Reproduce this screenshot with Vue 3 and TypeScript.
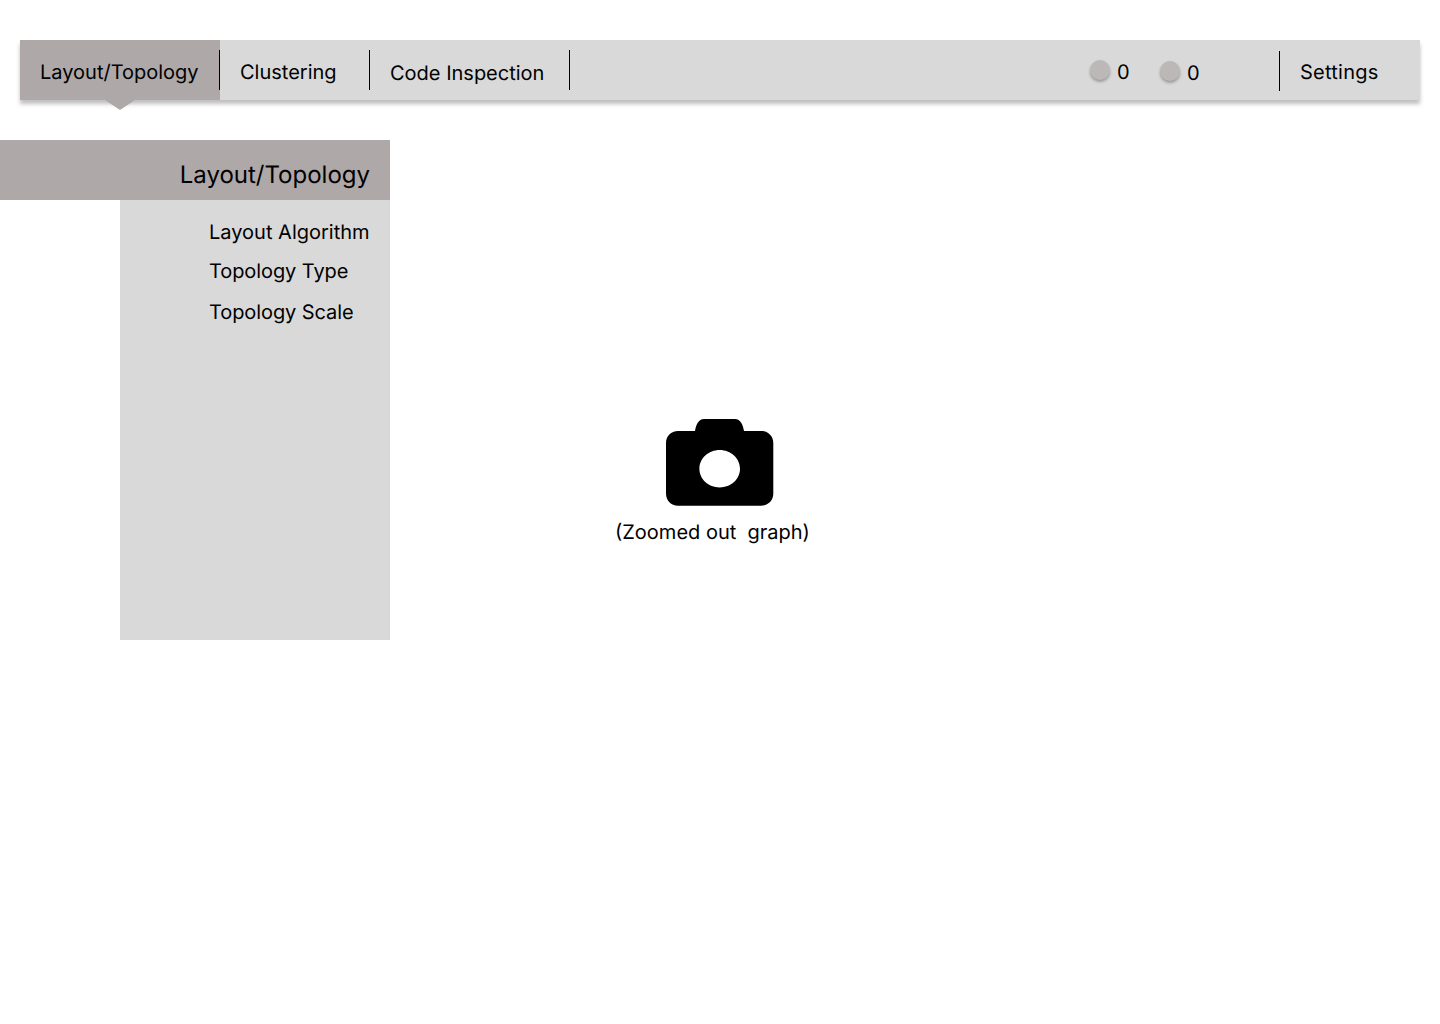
<script setup lang="ts">
const items: { label: string; cls: string }[] = [
  { label: 'Layout Algorithm', cls: 'i1' },
  { label: 'Topology Type', cls: 'i2' },
  { label: 'Topology Scale', cls: 'i3' },
]
</script>

<template>
  <div class="page">
    <header class="bar">
      <div class="tab active">
        <span>Layout/Topology</span>
        <i class="caret"></i>
      </div>
      <div class="tab clustering"><span>Clustering</span></div>
      <div class="tab code"><span>Code Inspection</span></div>
      <div class="status">
        <div class="stat first"><i class="dot"></i><span class="count">0</span></div>
        <div class="stat second"><i class="dot"></i><span class="count">0</span></div>
      </div>
      <div class="settings"><span>Settings</span></div>
    </header>

    <div class="content">
      <aside class="side">
        <div class="side-title">Layout/Topology</div>
        <ul class="side-body">
          <li v-for="item in items" :key="item.label" :class="item.cls">{{ item.label }}</li>
        </ul>
      </aside>
      <main class="stage">
        <svg class="camera" width="108" height="87" viewBox="0 0 108 87" aria-hidden="true">
          <path
            fill-rule="evenodd"
            d="M12 12H29C30 6 32.500 0 38 0H69C74.500 0 77 6 78 12H95C102 12 107.300 17 107.300 24V74.500C107.300 81.500 102 86.700 95 86.700H12C5 86.700 0 81.500 0 74.500V24C0 17 5 12 12 12ZM53.700 31C42.500 31 33.400 39.400 33.400 49.700C33.400 60 42.500 68.400 53.700 68.400C64.900 68.400 74 60 74 49.700C74 39.400 64.900 31 53.700 31Z"
            fill="#000"
          />
        </svg>
        <p class="caption">(Zoomed out&nbsp; graph)</p>
      </main>
    </div>
  </div>
</template>

<style scoped>
.page {
  width: 1440px;
  height: 1024px;
  padding-top: 40px;
  box-sizing: border-box;
  background: #fff;
  overflow: hidden;
  font-family: Inter, "Liberation Sans", sans-serif;
  color: #000;
  font-size: 20px;
  line-height: 24px;
  text-rendering: geometricPrecision;
  font-weight: 400;
}
.bar {
  display: flex;
  align-items: stretch;
  height: 60px;
  margin: 0 20px;
  background: #d9d9d9;
  box-shadow: 0 4px 4px rgba(0, 0, 0, 0.25);
}
.tab {
  position: relative;
  display: flex;
  align-items: center;
  box-sizing: border-box;
  padding: 4px 0 0 20px;
}
.tab::after {
  content: "";
  position: absolute;
  right: 0;
  top: 10px;
  width: 1px;
  height: 40px;
  background: #000;
}
.active {
  width: 200px;
  background: #aea8a8;
}
.clustering {
  width: 150px;
}
.code {
  width: 200px;
  padding-top: 6px;
}
.caret {
  position: absolute;
  left: 85px;
  top: 60px;
  width: 0;
  height: 0;
  border-left: 15px solid transparent;
  border-right: 15px solid transparent;
  border-top: 10px solid #aea8a8;
}
.status {
  display: flex;
  align-items: center;
  margin-left: auto;
}
.stat {
  display: flex;
  align-items: center;
  gap: 7px;
}
.first {
  width: 70px;
}
.second {
  width: 119px;
}
.count {
  padding-top: 4px;
}
.second .count {
  padding-top: 6px;
}
.dot {
  display: block;
  width: 20px;
  height: 20px;
  border-radius: 50%;
  background: #bdb8b8;
  box-shadow: 0 2px 3px rgba(0, 0, 0, 0.3);
}
.second .dot {
  margin-top: 2px;
}
.settings {
  position: relative;
  width: 141px;
  box-sizing: border-box;
  padding: 4px 0 0 21px;
  display: flex;
  align-items: center;
  letter-spacing: 0.25px;
}
.settings::before {
  content: "";
  position: absolute;
  left: 0;
  top: 11px;
  width: 1px;
  height: 40px;
  background: #000;
}
.content {
  display: flex;
  align-items: flex-start;
  margin-top: 40px;
}
.side {
  width: 390px;
  flex: none;
}
.side-title {
  height: 60px;
  background: #aea8a8;
  box-sizing: border-box;
  padding-right: 20px;
  text-align: right;
  font-size: 24px;
  line-height: 70px;
}
.side-body {
  height: 440px;
  margin: 0 0 0 120px;
  padding: 20px 0 0 89px;
  box-sizing: border-box;
  list-style: none;
  background: #d9d9d9;
}
.i2 {
  margin-top: 15px;
  letter-spacing: -0.08px;
}
.i3 {
  margin-top: 17px;
  letter-spacing: -0.08px;
}
.stage {
  flex: 1;
  padding: 279px 0 0 225px;
}
.camera {
  display: block;
  margin-left: 51px;
}
.caption {
  margin: 14px 0 0;
}
</style>
